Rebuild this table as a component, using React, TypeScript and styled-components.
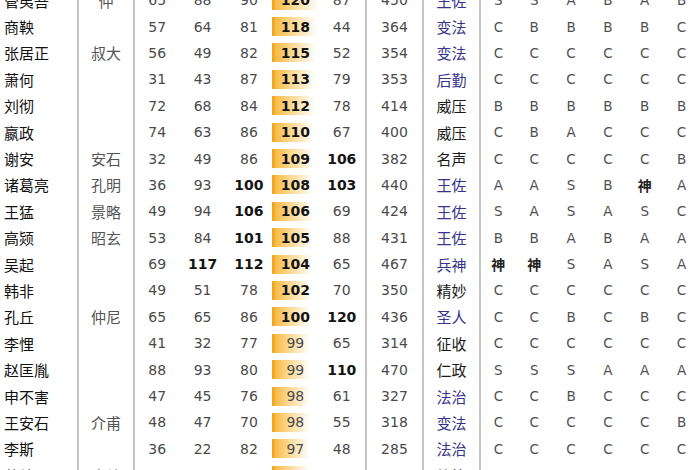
import styled, { createGlobalStyle } from "styled-components";

type Person = {
  name: string;
  zi: string;
  stats: number[];
  total: number;
  skill: string;
  skillBlue: boolean;
  grades: string[];
};

const people: Person[] = [
  { name: "管夷吾", zi: "仲", stats: [65, 88, 90, 120, 87], total: 450, skill: "王佐", skillBlue: true, grades: ["S", "S", "A", "B", "A", "B"] },
  { name: "商鞅", zi: "", stats: [57, 64, 81, 118, 44], total: 364, skill: "变法", skillBlue: true, grades: ["C", "B", "B", "B", "B", "C"] },
  { name: "张居正", zi: "叔大", stats: [56, 49, 82, 115, 52], total: 354, skill: "变法", skillBlue: true, grades: ["C", "C", "C", "C", "C", "C"] },
  { name: "萧何", zi: "", stats: [31, 43, 87, 113, 79], total: 353, skill: "后勤", skillBlue: true, grades: ["C", "C", "C", "C", "C", "C"] },
  { name: "刘彻", zi: "", stats: [72, 68, 84, 112, 78], total: 414, skill: "威压", skillBlue: false, grades: ["B", "B", "B", "B", "B", "B"] },
  { name: "嬴政", zi: "", stats: [74, 63, 86, 110, 67], total: 400, skill: "威压", skillBlue: false, grades: ["C", "B", "A", "C", "C", "C"] },
  { name: "谢安", zi: "安石", stats: [32, 49, 86, 109, 106], total: 382, skill: "名声", skillBlue: false, grades: ["C", "C", "C", "C", "C", "B"] },
  { name: "诸葛亮", zi: "孔明", stats: [36, 93, 100, 108, 103], total: 440, skill: "王佐", skillBlue: true, grades: ["A", "A", "S", "B", "神", "A"] },
  { name: "王猛", zi: "景略", stats: [49, 94, 106, 106, 69], total: 424, skill: "王佐", skillBlue: true, grades: ["S", "A", "S", "A", "S", "C"] },
  { name: "高颎", zi: "昭玄", stats: [53, 84, 101, 105, 88], total: 431, skill: "王佐", skillBlue: true, grades: ["B", "B", "A", "B", "A", "A"] },
  { name: "吴起", zi: "", stats: [69, 117, 112, 104, 65], total: 467, skill: "兵神", skillBlue: true, grades: ["神", "神", "S", "A", "S", "A"] },
  { name: "韩非", zi: "", stats: [49, 51, 78, 102, 70], total: 350, skill: "精妙", skillBlue: false, grades: ["C", "C", "C", "C", "C", "C"] },
  { name: "孔丘", zi: "仲尼", stats: [65, 65, 86, 100, 120], total: 436, skill: "圣人", skillBlue: true, grades: ["C", "C", "B", "C", "B", "C"] },
  { name: "李悝", zi: "", stats: [41, 32, 77, 99, 65], total: 314, skill: "征收", skillBlue: false, grades: ["C", "C", "C", "C", "C", "C"] },
  { name: "赵匡胤", zi: "", stats: [88, 93, 80, 99, 110], total: 470, skill: "仁政", skillBlue: false, grades: ["S", "S", "S", "A", "A", "A"] },
  { name: "申不害", zi: "", stats: [47, 45, 76, 98, 61], total: 327, skill: "法治", skillBlue: true, grades: ["C", "C", "B", "C", "C", "C"] },
  { name: "王安石", zi: "介甫", stats: [48, 47, 70, 98, 55], total: 318, skill: "变法", skillBlue: true, grades: ["C", "C", "C", "C", "C", "B"] },
  { name: "李斯", zi: "", stats: [36, 22, 82, 97, 48], total: 285, skill: "法治", skillBlue: true, grades: ["C", "C", "C", "C", "C", "C"] },
  { name: "苏绰", zi: "令绰", stats: [40, 46, 81, 97, 66], total: 330, skill: "筹算", skillBlue: false, grades: ["C", "C", "C", "C", "C", "C"] },
];

const App = () => {
  return (
    <>
      <GlobalStyle />
      <Table>
        {people.map((p) => (
          <Row key={p.name}>
            <NameCell>{p.name}</NameCell>
            <ZiCell>{p.zi}</ZiCell>
            {p.stats.map((v, i) => (
              <StatCell key={i} $bold={v >= 100} $bar={i === 3 ? Math.round((v / 120) * 46) : 0}>
                {v}
              </StatCell>
            ))}
            <TotalCell>{p.total}</TotalCell>
            <SkillCell $blue={p.skillBlue}>{p.skill}</SkillCell>
            {p.grades.map((g, i) => (
              <GradeCell key={i} $god={g === "神"} $first={i === 0}>
                {g}
              </GradeCell>
            ))}
          </Row>
        ))}
      </Table>
    </>
  );
};

export default App;

const GlobalStyle = createGlobalStyle`
  html, body {
    margin: 0;
    padding: 0;
    background: #ffffff;
    overflow: hidden;
  }
`;

// 表全体、一行目は上に少し切れている
const Table = styled.div`
  width: 700px;
  margin-top: -13px;
  font-family: "DejaVu Sans", "Noto Sans CJK SC", sans-serif;
`;

const Row = styled.div`
  display: grid;
  grid-template-columns: 77px 56px repeat(5, 46.4px) 57px 57px repeat(6, 1fr);
  height: 26.4px;
  align-items: stretch;
`;

const Cell = styled.div`
  display: flex;
  align-items: center;
  justify-content: center;
  white-space: nowrap;
`;

const NameCell = styled(Cell)`
  justify-content: flex-start;
  padding-left: 4px;
  font-family: "Noto Sans CJK SC", sans-serif;
  font-size: 15px;
  color: #111111;
`;

const ZiCell = styled(Cell)`
  border-left: 2px solid #c4c4c4;
  font-family: "Noto Sans CJK SC", sans-serif;
  font-size: 15px;
  color: #555555;
`;

// 政治の列だけオレンジのデータバーを付ける
const StatCell = styled(Cell)<{ $bold: boolean; $bar: number }>`
  font-size: 14px;
  font-weight: ${(p) => (p.$bold ? "bold" : "normal")};
  color: ${(p) => (p.$bold ? "#141414" : "#4a4a4a")};
  &:nth-child(3) {
    border-left: 2px solid #c4c4c4;
  }
  background: ${(p) =>
    p.$bar
      ? "linear-gradient(to right, #f0a51e 0, #f0a51e 2px, #f7b944 3px, #fad27f 35%, #fde9c2 70%, #ffffff 100%) no-repeat left center"
      : "none"};
  background-size: ${(p) => `${p.$bar}px 19px`};
`;

const TotalCell = styled(Cell)`
  border-left: 2px solid #c4c4c4;
  font-size: 14px;
  color: #4a4a4a;
`;

const SkillCell = styled(Cell)<{ $blue: boolean }>`
  border-left: 2px solid #c4c4c4;
  font-family: "Noto Sans CJK SC", sans-serif;
  font-size: 15px;
  color: ${(p) => (p.$blue ? "#35358c" : "#1a1a1a")};
`;

const GradeCell = styled(Cell)<{ $god: boolean; $first: boolean }>`
  border-left: ${(p) => (p.$first ? "2px solid #c4c4c4" : "none")};
  font-size: ${(p) => (p.$god ? "14px" : "13.5px")};
  font-family: ${(p) => (p.$god ? "\"Noto Sans CJK SC\", sans-serif" : "\"DejaVu Sans\", sans-serif")};
  font-weight: ${(p) => (p.$god ? "bold" : "normal")};
  color: ${(p) => (p.$god ? "#222222" : "#505050")};
`;
